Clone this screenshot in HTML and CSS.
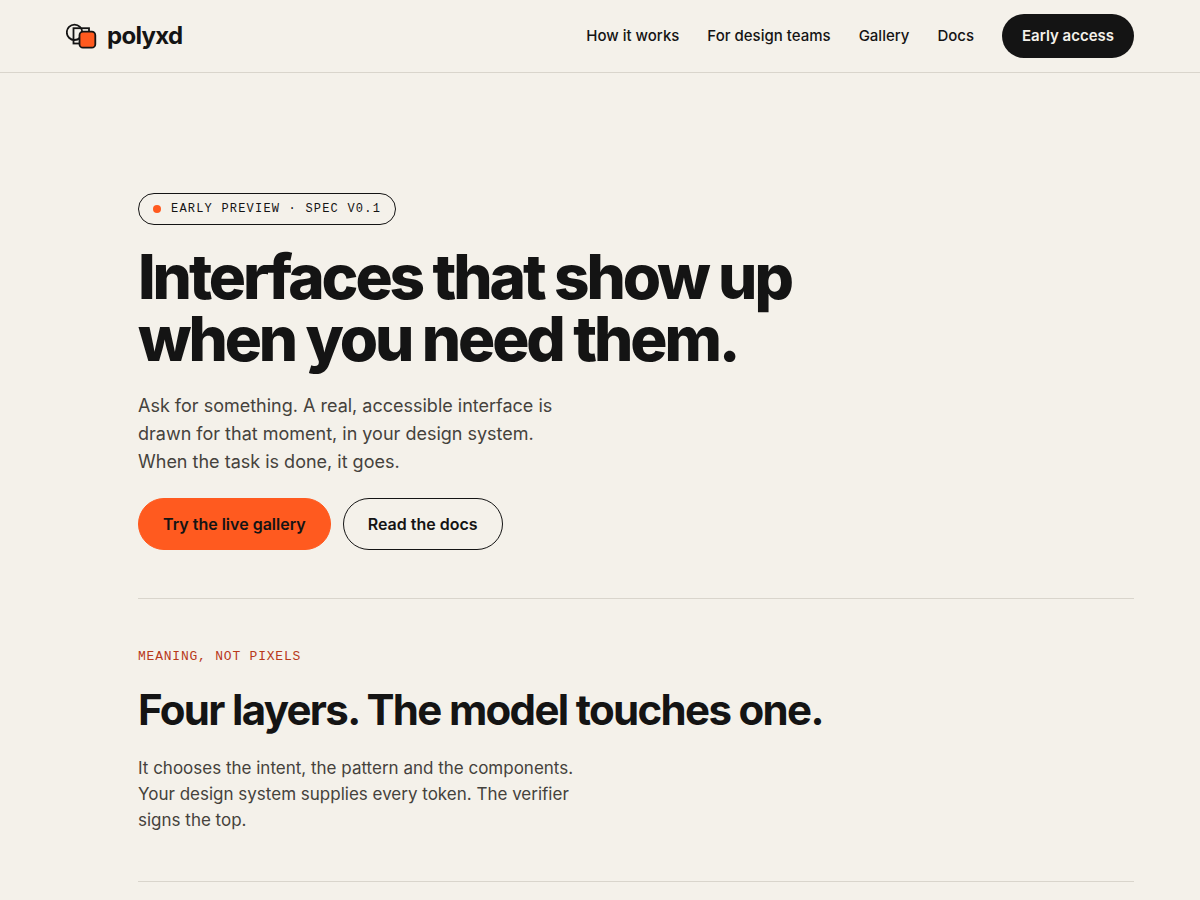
FILE: index.html
```
<!DOCTYPE html>
<html lang="en">

<head>
    <meta charset="UTF-8">
    <meta name="viewport" content="width=device-width, initial-scale=1.0">
    <title>polyxd</title>
    <link rel="stylesheet" href="styles.css">
</head>

<body>
    <header class="site-header">
        <a class="brand" href="#">
            <svg class="brand-mark" width="32" height="26" viewBox="0 0 32 26" fill="none" stroke="#141414" aria-hidden="true">
                <circle cx="8.5" cy="9.3" r="7.7" stroke-width="1.8" />
                <rect x="7.5" y="5.2" width="15.5" height="15.3" stroke-width="1.8" />
                <rect x="13.5" y="8.7" width="15.8" height="16" rx="3.5" fill="#ff5a1f" stroke-width="1.8" />
            </svg>
            <span>polyxd</span>
        </a>
        <nav class="site-nav">
            <a href="#how">How it works</a>
            <a href="#teams">For design teams</a>
            <a href="#gallery">Gallery</a>
            <a href="#docs">Docs</a>
            <a class="nav-cta" href="#access">Early access</a>
        </nav>
    </header>

    <main class="content">
        <section class="hero">
            <p class="badge"><span class="dot"></span>EARLY PREVIEW · SPEC V0.1</p>
            <h1>Interfaces that show up when you need them.</h1>
            <p class="lead">Ask for something. A real, accessible interface is<br>drawn for that moment, in your design system.<br>When the task is done, it goes.</p>
            <div class="actions">
                <a class="button primary" href="#gallery">Try the live gallery</a>
                <a class="button" href="#docs">Read the docs</a>
            </div>
        </section>

        <section class="layers" id="how">
            <p class="eyebrow">MEANING, NOT PIXELS</p>
            <h2>Four layers. The model touches one.</h2>
            <p class="text">It chooses the intent, the pattern and the components.<br>Your design system supplies every token. The verifier<br>signs the top.</p>
        </section>
    </main>
</body>

</html>
```
FILE: styles.css
```
* {
    box-sizing: border-box;
}

body {
    margin: 0;
    background: #f4f1ea;
    color: #141414;
    font-family: Inter, "Liberation Sans", sans-serif;
}

a {
    color: inherit;
    text-decoration: none;
}

h1,
h2,
p {
    margin: 0;
}

.site-header {
    display: flex;
    justify-content: space-between;
    align-items: center;
    padding: 14px 5.5%;
    border-bottom: 1px solid #d9d5cc;
}

.brand {
    display: flex;
    align-items: center;
    gap: 9px;
    font-size: 24px;
    font-weight: 700;
    line-height: 28px;
    letter-spacing: -0.03em;
}

.brand-mark {
    flex: none;
}

.site-nav {
    display: flex;
    align-items: center;
    gap: 28px;
    font-size: 15px;
    font-weight: 500;
    line-height: 44px;
}

.nav-cta {
    padding: 0 20px;
    border-radius: 22px;
    background: #141414;
    color: #f4f1ea;
    font-weight: 600;
}

.content {
    padding: 0 5.5% 0 11.5%;
}

.hero {
    padding: 120px 0 48px;
    border-bottom: 1px solid #d9d5cc;
}

.badge {
    display: inline-flex;
    align-items: center;
    gap: 10px;
    padding: 0 14px;
    border: 1px solid #141414;
    border-radius: 16px;
    font-family: "Liberation Mono", monospace;
    font-size: 12px;
    line-height: 30px;
    letter-spacing: 0.1em;
}

.dot {
    width: 8px;
    height: 8px;
    border-radius: 50%;
    background: #ff5a1f;
}

h1 {
    max-width: 720px;
    margin-top: 21px;
    font-size: 62px;
    font-weight: 800;
    line-height: 62px;
    letter-spacing: -0.05em;
}

.lead {
    margin-top: 22px;
    color: #45423c;
    font-size: 18px;
    line-height: 28px;
}

.actions {
    display: flex;
    flex-wrap: wrap;
    gap: 12px;
    margin-top: 22px;
}

.button {
    padding: 0 24px;
    border: 1px solid #141414;
    border-radius: 26px;
    font-size: 16px;
    font-weight: 600;
    line-height: 50px;
}

.button.primary {
    border-color: #ff5a1f;
    background: #ff5a1f;
}

.layers {
    padding: 48px 0;
    border-bottom: 1px solid #d9d5cc;
}

.eyebrow {
    color: #b8391a;
    font-family: "Liberation Mono", monospace;
    font-size: 13px;
    line-height: 20px;
    letter-spacing: 0.06em;
}

h2 {
    margin-top: 20px;
    font-size: 42px;
    font-weight: 700;
    line-height: 46px;
    letter-spacing: -0.04em;
}

.text {
    margin-top: 22px;
    color: #45423c;
    font-size: 17px;
    line-height: 26px;
}
```
